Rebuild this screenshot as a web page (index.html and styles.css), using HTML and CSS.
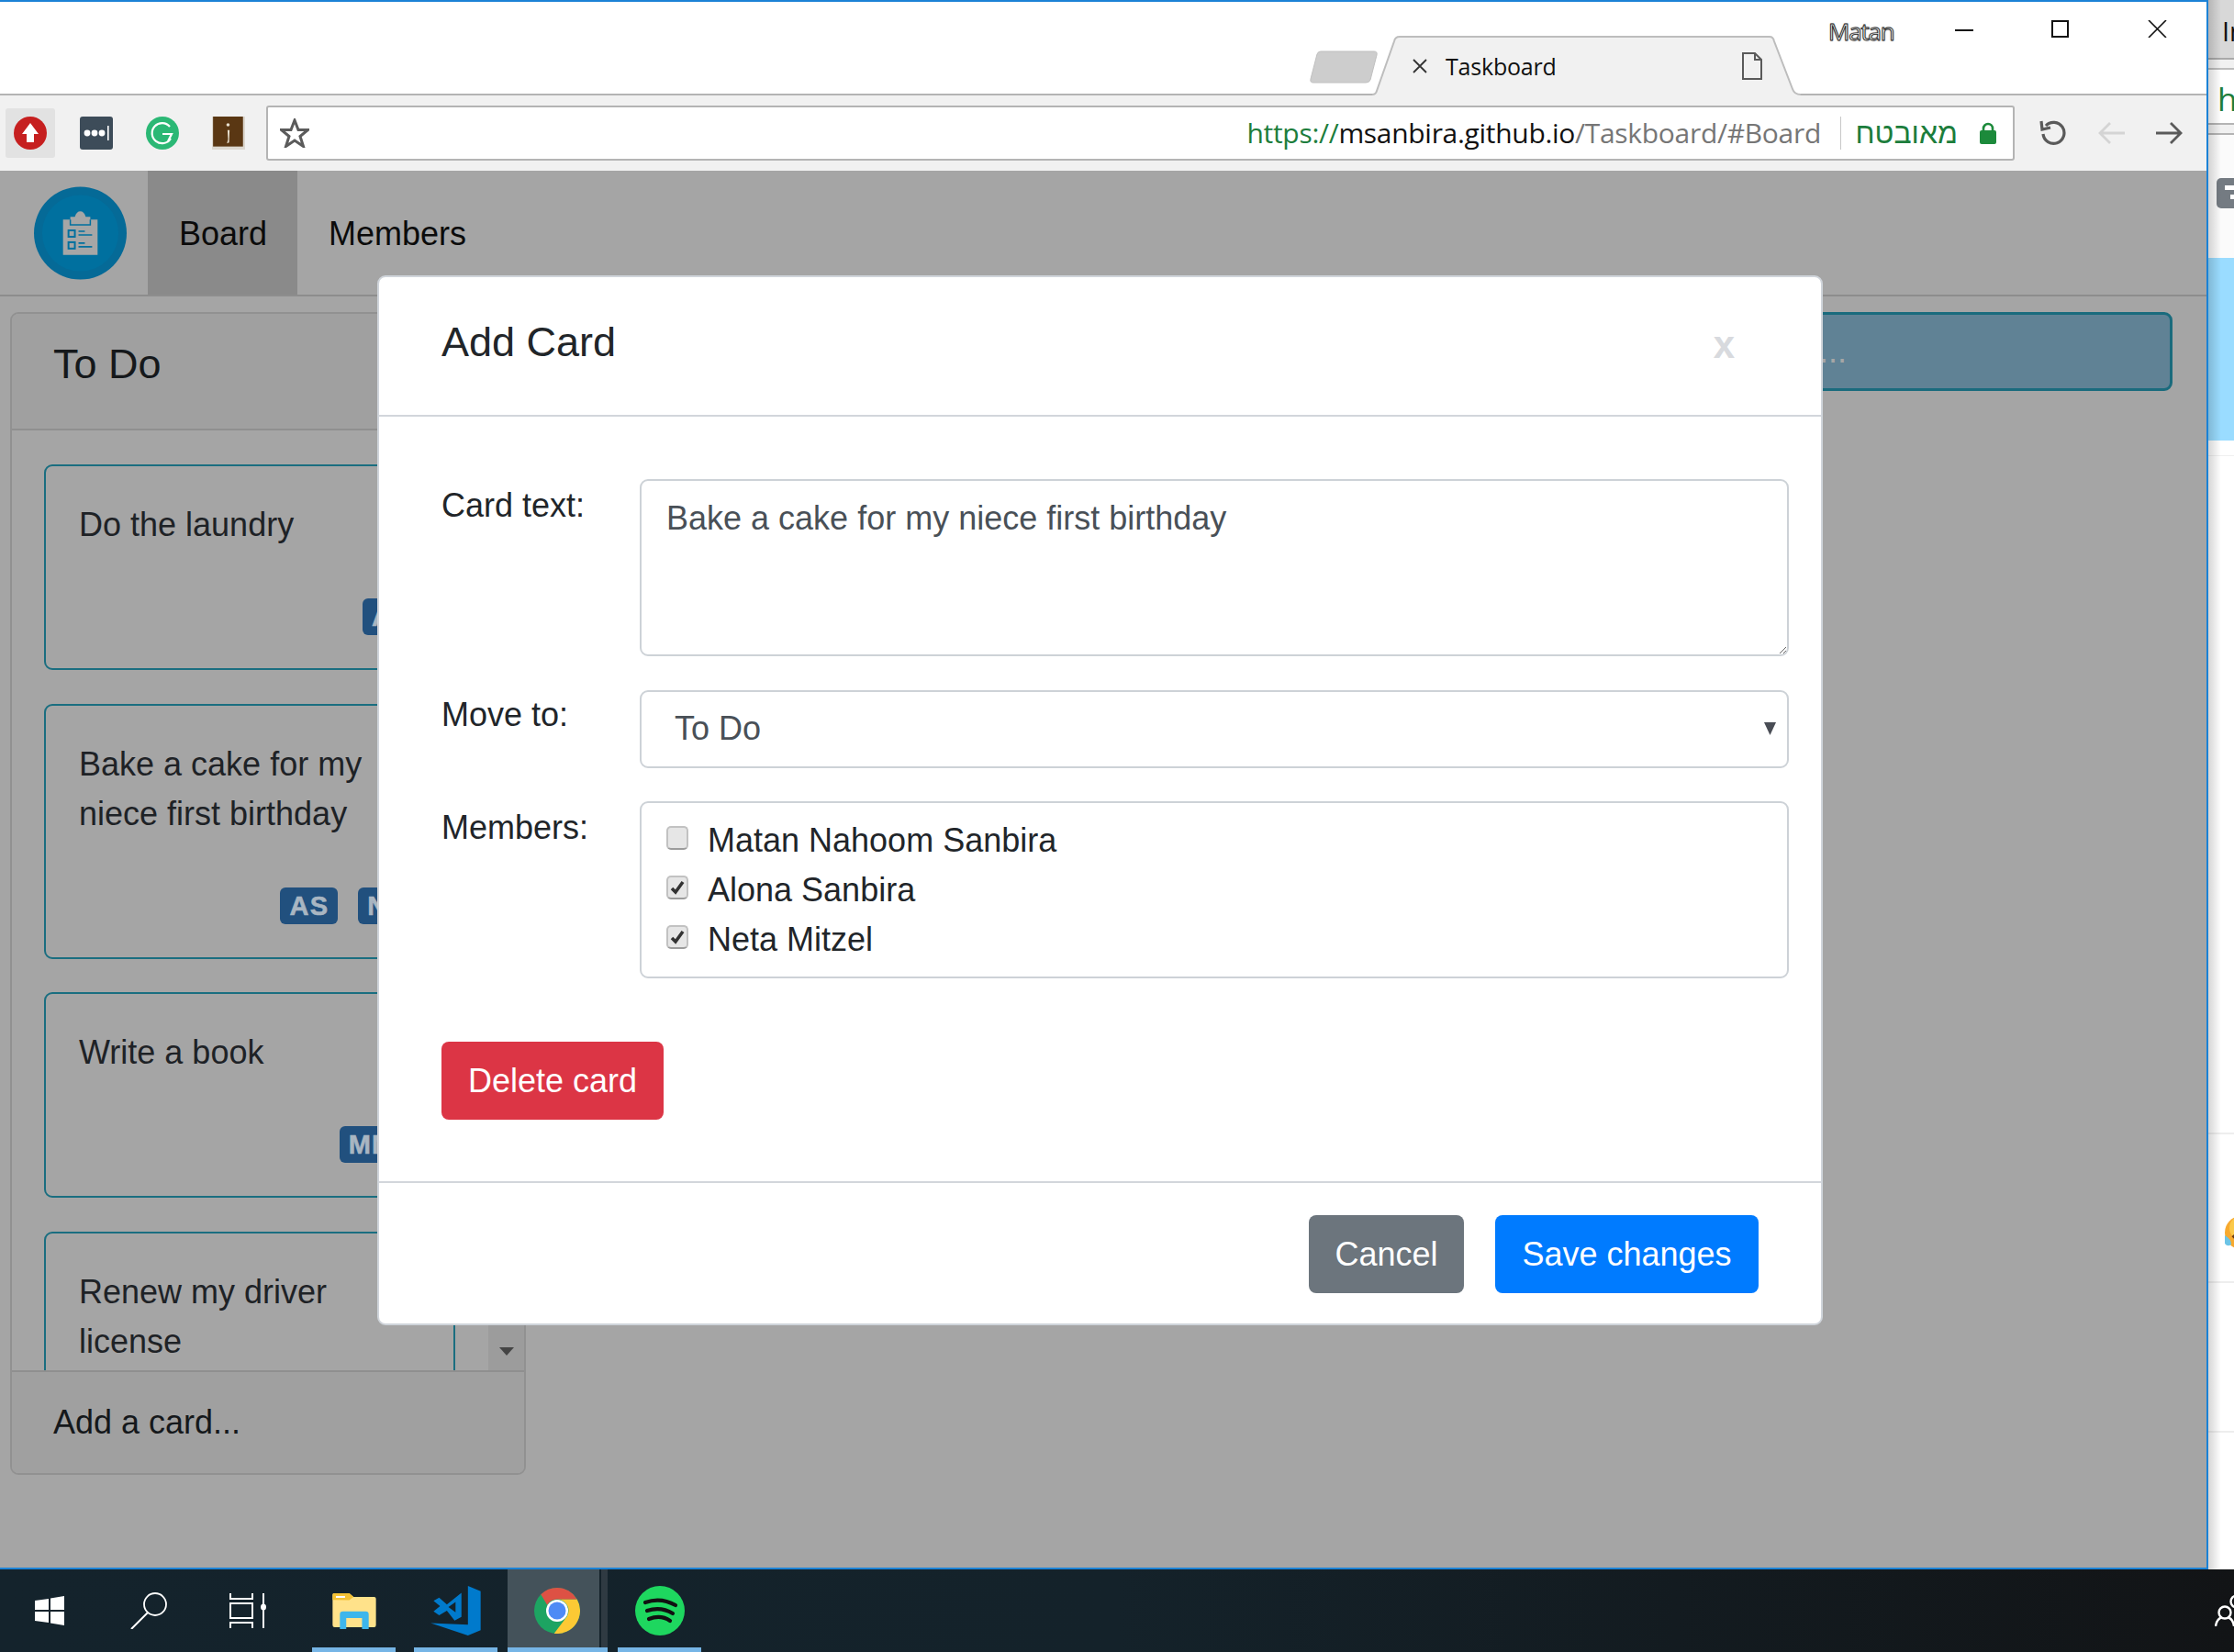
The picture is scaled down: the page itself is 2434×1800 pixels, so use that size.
FILE: index.html
```html
<!DOCTYPE html>
<html lang="en">
<head>
<meta charset="utf-8">
<title>Taskboard</title>
<link rel="stylesheet" href="styles.css">
</head>
<body>
<div class="screen">
  <div class="desktop">
    <div class="window">
      <div class="tabstrip">
        <svg class="newtab" viewBox="0 0 74 36"><path d="M12 1H70Q74 1 73 5L66 32Q65 35 61 35H4Q0 35 1 31L8 4Q9 1 12 1Z" fill="#cdcdcd" stroke="#c0c0c0"/></svg>
        <div class="tab">
          <svg class="tab-x" viewBox="0 0 16 16"><path d="M1 1L15 15M15 1L1 15" stroke="#333" stroke-width="1.8"/></svg>
          <span class="tab-title">Taskboard</span>
          <svg class="tab-page" viewBox="0 0 22 30"><path d="M1 1H14L21 8V29H1ZM14 1V8H21" fill="none" stroke="#5a5a5a" stroke-width="2"/></svg>
        </div>
        <span class="profile">Matan</span>
        <svg class="win-min" viewBox="0 0 20 2"><rect width="20" height="2" fill="#111"/></svg>
        <svg class="win-max" viewBox="0 0 19 19"><rect x="1" y="1" width="17" height="17" fill="none" stroke="#111" stroke-width="2"/></svg>
        <svg class="win-close" viewBox="0 0 21 19"><path d="M1 0L20 19M20 0L1 19" stroke="#111" stroke-width="1.6"/></svg>
      </div>
      <div class="toolbar">
        <div class="ext ext-active">
          <svg viewBox="0 0 36 36"><circle cx="18" cy="18" r="18" fill="#c61f1f"/><path d="M18 7L27 19H22V28H14V19H9Z" fill="#fff"/></svg>
        </div>
        <div class="ext">
          <svg viewBox="0 0 36 36"><rect width="36" height="36" rx="3" fill="#3d4c59"/><circle cx="8" cy="18" r="3.4" fill="#fff"/><circle cx="16" cy="18" r="3.4" fill="#fff"/><circle cx="24" cy="18" r="3.4" fill="#fff"/><rect x="30" y="10" width="1.6" height="16" fill="#fff"/></svg>
        </div>
        <div class="ext">
          <svg viewBox="0 0 36 36"><circle cx="18" cy="18" r="18" fill="#2bb875"/><path d="M26 11A11 11 0 1 0 27 24M18 19H28L24 27" fill="none" stroke="#fff" stroke-width="2.2"/></svg>
        </div>
        <div class="ext">
          <svg viewBox="0 0 32 32"><rect width="32" height="32" fill="#ddd8d0"/><rect x="1" y="0" width="29" height="29" fill="#5a3713"/><circle cx="15.5" cy="8" r="1.6" fill="#e8e0d0"/><path d="M15 13H17L16.5 25L14.5 26L15.5 22Z" fill="#e8e0d0"/></svg>
        </div>
        <div class="address">
          <svg class="star" viewBox="0 0 32 32"><path d="M16 2L20 12.500L30.500 12.500L22 19.500L25.500 30.500L16 24L6.500 30.500L10 19.500L1.500 12.500L12 12.500Z" fill="none" stroke="#5b5b5b" stroke-width="3"/></svg>
          <span class="url"><span class="url-scheme">https://</span><span class="url-host">msanbira.github.io</span><span class="url-path">/Taskboard/#Board</span></span>
          <span class="secure-sep"></span>
          <bdi class="secure" dir="rtl">מאובטח</bdi>
          <svg class="lock" viewBox="0 0 18 24"><path d="M4 11V7A5 5 0 0 1 14 7V11" fill="none" stroke="#1c8a3b" stroke-width="2.600"/><rect y="9" width="18" height="15" rx="2" fill="#1c8a3b"/></svg>
        </div>
        <svg class="nav-reload" viewBox="0 0 30 28"><path d="M7 6A11.500 11.500 0 1 1 4 15" fill="none" stroke="#5a5a5a" stroke-width="3.200"/><path d="M2 1L3 10L12 8" fill="none" stroke="#5a5a5a" stroke-width="3.200"/></svg>
        <svg class="nav-back" viewBox="0 0 31 26"><path d="M30 13H3M14 2L3 13L14 24" fill="none" stroke="#d4d4d4" stroke-width="2.800"/></svg>
        <svg class="nav-forward" viewBox="0 0 31 26"><path d="M1 13H28M17 2L28 13L17 24" fill="none" stroke="#5a5a5a" stroke-width="2.800"/></svg>
      </div>
      <div class="page">
        <nav class="navbar">
          <div class="brand">
            <svg viewBox="0 0 102 102">
              <circle cx="51" cy="51" r="51" fill="#056a97"/>
              <circle cx="51" cy="51" r="42" fill="#00709f"/>
              <path d="M32 36H40V33H45Q47 27 51 27Q55 27 57 33H62V36H70V75H32Z" fill="#a6a6a6"/>
              <path d="M40 36V42H62V36" fill="none" stroke="#00709f" stroke-width="1.500"/>
              <rect x="38" y="48" width="7" height="7" fill="none" stroke="#00709f" stroke-width="2"/>
              <rect x="38" y="61" width="7" height="7" fill="none" stroke="#00709f" stroke-width="2"/>
              <path d="M49 49H56M49 53H64M49 62H56M49 66H64" stroke="#00709f" stroke-width="1.600"/>
            </svg>
          </div>
          <a class="nav-item nav-item-active">Board</a>
          <a class="nav-item">Members</a>
        </nav>
        <div class="board">
          <section class="list">
            <header class="list-head">To Do</header>
            <div class="list-body">
              <div class="cards">
                <article class="card">
                  <p class="card-text">Do the laundry</p>
                  <div class="card-members"><span class="badge">AS</span></div>
                </article>
                <article class="card">
                  <p class="card-text">Bake a cake for my niece first birthday</p>
                  <div class="card-members"><span class="badge">AS</span><span class="badge">NM</span></div>
                </article>
                <article class="card">
                  <p class="card-text">Write a book</p>
                  <div class="card-members"><span class="badge">MNS</span></div>
                </article>
                <article class="card">
                  <p class="card-text">Renew my driver license</p>
                  <div class="card-members"><span class="badge">AS</span></div>
                </article>
              </div>
              <div class="scrollbar"><svg class="scroll-down" viewBox="0 0 16 9"><path d="M0 0H16L8 9Z" fill="#444"/></svg></div>
            </div>
            <footer class="list-foot">Add a card...</footer>
          </section>
          <div class="add-list">Add a list...</div>
        </div>
        <div class="modal">
          <div class="modal-head">
            <h2 class="modal-title">Add Card</h2>
            <span class="modal-close">x</span>
          </div>
          <div class="modal-body">
            <div class="form-grid">
              <label class="form-label">Card text:</label>
              <textarea class="field field-text">Bake a cake for my niece first birthday</textarea>
              <label class="form-label form-label-tight">Move to:</label>
              <select class="field field-select"><option>To Do</option></select>
              <label class="form-label">Members:</label>
              <div class="field field-members">
                <label class="member"><input type="checkbox" class="check"><span>Matan Nahoom Sanbira</span></label>
                <label class="member"><input type="checkbox" class="check" checked><span>Alona Sanbira</span></label>
                <label class="member"><input type="checkbox" class="check" checked><span>Neta Mitzel</span></label>
              </div>
            </div>
            <button class="btn btn-danger">Delete card</button>
          </div>
          <div class="modal-foot">
            <button class="btn btn-secondary">Cancel</button>
            <button class="btn btn-primary">Save changes</button>
          </div>
        </div>
      </div>
    </div>
    <aside class="side">
      <div class="side-tabs">In</div>
      <div class="side-gap"></div>
      <div class="side-url">ht</div>
      <div class="side-bar"></div>
      <div class="side-top"><span class="side-badge"></span></div>
      <div class="side-blue"></div>
      <div class="side-white"></div>
      <div class="side-row side-row-a"></div>
      <div class="side-row side-row-b">
        <svg class="emoji" viewBox="0 0 38 38"><circle cx="19" cy="19" r="18" fill="#f7a92e"/><circle cx="19" cy="14" r="13" fill="#fbc94a"/><path d="M10 22Q19 32 30 20" fill="none" stroke="#6b3b10" stroke-width="4"/><path d="M1 22Q8 26 8 32Q4 35 1 31Z" fill="#6cc4e6"/></svg>
      </div>
      <div class="side-row side-row-c"></div>
      <div class="side-row side-row-d"></div>
    </aside>
  </div>
  <div class="taskbar">
    <div class="task-cell task-sys">
      <svg class="ico-win" viewBox="0 0 32 32"><path d="M0 5L15 3V15H0ZM17 2.600L32 0V15H17ZM0 17H15V29L0 27ZM17 17H32V32L17 29.400Z" fill="#fff"/></svg>
    </div>
    <div class="task-cell task-sys">
      <svg class="ico-search" viewBox="0 0 40 40"><ellipse cx="27" cy="13" rx="12" ry="12" fill="none" stroke="#fff" stroke-width="1.800"/><path d="M19 22L1 40" stroke="#fff" stroke-width="2"/></svg>
    </div>
    <div class="task-cell task-sys">
      <svg class="ico-view" viewBox="0 0 40 38"><path d="M1 0V6H25V0M1 11H25V27H1ZM1 38V32H25V38M37 0V12M37 18V38" fill="none" stroke="#fff" stroke-width="2"/><ellipse cx="37" cy="15" rx="3" ry="3.500" fill="#fff"/></svg>
    </div>
    <div class="task-cell task-app">
      <svg class="ico-folder" viewBox="63 60 143 118"><path d="M63 65Q63 60 68 60H118L132 72H200Q206 72 206 78V165Q206 172 200 172H70Q63 172 63 165Z" fill="#ffe28a"/><path d="M63 82V65Q63 60 68 60H118L132 72L118 83Z" fill="#f5c235"/><rect x="74" y="69" width="30" height="6" fill="#fff"/><path d="M87 178V130Q87 120 97 120H172Q182 120 182 130V178H160V142H108V178Z" fill="#3db6ec"/></svg>
    </div>
    <div class="task-cell task-app">
      <svg class="ico-code" viewBox="388 40 161 160"><path fill-rule="evenodd" d="M397 88L415 78L440 100L487 62V140L465 152L440 120L415 135L397 122L418 105ZM445 108L468 92V125Z" fill="#007acc"/><path d="M508 40L549 57V183L508 200L388 160L508 165Z" fill="#007acc"/></svg>
    </div>
    <div class="task-cell task-app task-open">
      <svg class="ico-chrome" viewBox="0 0 100 100">
        <circle cx="50" cy="50" r="50" fill="#1da462"/>
        <path d="M93.300 25A50 50 0 0 1 43.500 99.600L71.600 62.500A25 25 0 0 0 50 25Z" fill="#fcc934"/>
        <path d="M50 0A50 50 0 0 1 93.300 25H50A25 25 0 0 0 28.300 37.500L14.600 14.600A50 50 0 0 1 50 0Z" fill="#dd5144"/>
        <circle cx="50" cy="50" r="24" fill="#fff"/>
        <circle cx="50" cy="50" r="19" fill="#4e8bf5"/>
      </svg>
    </div>
    <div class="task-cell task-app">
      <svg class="ico-spotify" viewBox="0 0 54 54"><circle cx="27" cy="27" r="27" fill="#1ed75f"/><path d="M11 18Q28 12 44 21M13 27Q28 22 41 30M15 36Q28 31 38 38" fill="none" stroke="#111" stroke-width="4.200" stroke-linecap="round"/></svg>
    </div>
    <svg class="ico-people" viewBox="0 0 30 36"><circle cx="11" cy="21" r="6.500" fill="none" stroke="#fff" stroke-width="2.400"/><path d="M1 36Q2 28 8 26M21 36Q20 28 14 26" fill="none" stroke="#fff" stroke-width="2.400"/><circle cx="24" cy="9" r="6.500" fill="none" stroke="#fff" stroke-width="2.400"/></svg>
  </div>
</div>
</body>
</html>
```
FILE: styles.css
```css
* { box-sizing: border-box; }
html, body { margin: 0; padding: 0; }
body {
  width: 2434px;
  height: 1800px;
  overflow: hidden;
  font-family: "Liberation Sans", Arial, sans-serif;
  font-size: 36px;
  line-height: 54px;
  color: #1c1f22;
  background: #fff;
}
.screen { display: flex; flex-direction: column; width: 2434px; height: 1800px; }
.desktop { display: flex; height: 1710px; }

/* browser window */
.window {
  width: 2406px;
  height: 1710px;
  display: flex;
  flex-direction: column;
  border-top: 2px solid #1b82d6;
  border-right: 2px solid #1b82d6;
  border-bottom: 2px solid #1b82d6;
}
.tabstrip {
  height: 102px;
  flex: none;
  display: flex;
  justify-content: flex-end;
  align-items: flex-start;
  padding-right: 43px;
  border-bottom: 2px solid #b4b4b4;
  background: #fff;
}
.newtab { width: 74px; height: 36px; margin-top: 53px; margin-right: -6px; flex: none; }
.tab {
  width: 467px;
  height: 65px;
  margin-top: 37px;
  flex: none;
  display: flex;
  align-items: center;
  padding: 0 42px 0 44px;
  background: url("data:image/svg+xml,%3Csvg xmlns='http://www.w3.org/2000/svg' width='467' height='65'%3E%3Cpath d='M0 64Q4 64 5 60L24 6Q25 1 30 1H433Q437 1 438 6L458 58Q460 64 467 64V66H0Z' fill='%23f1f1f1' stroke='%23bdbdbd' stroke-width='2'/%3E%3C/svg%3E") no-repeat;
}
.tab-x { width: 16px; height: 16px; flex: none; }
.tab-title {
  flex: 1;
  margin-left: 20px;
  font-family: "Open Sans", sans-serif;
  font-size: 25px;
  line-height: 34px;
  letter-spacing: -.2px;
  color: #111;
}
.tab-page { width: 22px; height: 30px; flex: none; }
.profile {
  width: 72px;
  margin: 16px 0 0 30px;
  flex: none;
  font-family: "Open Sans", sans-serif;
  font-size: 26px;
  line-height: 32px;
  letter-spacing: -1.200px;
  color: #f6f6f6;
  -webkit-text-stroke: .9px #222;
  text-shadow: 0 0 2px #666;
}
.win-min { width: 20px; height: 2px; margin: 30px 0 0 66px; flex: none; }
.win-max { width: 19px; height: 19px; margin: 20px 0 0 85px; flex: none; }
.win-close { width: 21px; height: 19px; margin: 20px 0 0 86px; flex: none; }

.toolbar {
  height: 82px;
  flex: none;
  display: flex;
  align-items: center;
  padding-left: 6px;
  gap: 18px;
  background: #f1f1f1;
}
.ext { width: 54px; height: 54px; flex: none; display: flex; align-items: center; justify-content: center; border-radius: 3px; }
.ext-active { background: #e2e2e2; }
.ext svg { width: 36px; height: 36px; }
.address {
  width: 1905px;
  height: 60px;
  margin-left: -4px;
  flex: none;
  display: flex;
  align-items: center;
  padding: 0 18px 0 13px;
  background: #fff;
  border: 2px solid #b4b4b4;
  border-radius: 3px;
}
.star { width: 32px; height: 32px; flex: none; }
.url {
  margin-left: auto;
  font-family: "Open Sans", sans-serif;
  font-size: 30px;
  line-height: 40px;
  letter-spacing: -.3px;
  white-space: nowrap;
  color: #767676;
}
.url-scheme { color: #1c7d3c; }
.url-host { color: #111; }
.secure-sep { width: 1px; height: 36px; margin: 0 19px 0 21px; background: #c8c8c8; flex: none; }
.secure { font-family: "Liberation Sans", sans-serif; font-size: 32px; line-height: 40px; color: #1c7d3c; width: 108px; flex: none; text-align: center; }
.lock { width: 18px; height: 24px; margin-left: 24px; flex: none; }
.nav-reload { width: 30px; height: 28px; margin-left: 9px; flex: none; }
.nav-back { width: 31px; height: 26px; margin-left: 15px; flex: none; }
.nav-forward { width: 31px; height: 26px; margin-left: 14px; flex: none; }

/* app page (dimmed by the open dialog) */
.page { position: relative; flex: 1; display: flex; flex-direction: column; background: #a5a5a5; overflow: hidden; }
.navbar { height: 137px; flex: none; display: flex; border-bottom: 2px solid #8d8d8d; }
.brand { width: 161px; flex: none; display: flex; align-items: center; padding: 0 0 0 37px; }
.brand svg { width: 101px; height: 102px; }
.nav-item { padding: 2px 33px 0 34px; display: flex; align-items: center; color: #0b0b0b; }
.nav-item-active { background: #8a8a8a; }

.board { flex: 1; display: flex; align-items: flex-start; padding: 17px 37px 0 11px; }
.list {
  width: 562px;
  height: 1267px;
  flex: none;
  display: flex;
  flex-direction: column;
  border: 2px solid #919191;
  border-radius: 9px;
  overflow: hidden;
}
.list-head {
  height: 127px;
  flex: none;
  padding: 28px 0 0 45px;
  font-size: 45px;
  line-height: 54px;
  background: #a0a0a0;
  border-bottom: 2px solid #8f8f8f;
  color: #15181b;
}
.list-body { flex: 1; min-height: 0; display: flex; }
.cards { flex: 1; min-width: 0; overflow: hidden; display: flex; flex-direction: column; gap: 36.500px; padding: 37px 36px 0 35px; }
.card { flex: none; border: 2px solid #1a6e80; border-radius: 9px; padding: 37px 36px 36px; }
.card-text { margin: 0; color: #1e2226; }
.card-members { display: flex; justify-content: flex-end; gap: 22px; margin-top: 53px; }
.badge {
  height: 40px;
  padding: 0 10px;
  font-size: 29px;
  line-height: 40px;
  font-weight: 700;
  letter-spacing: 1.300px;
  -webkit-text-stroke: .6px #a9b6c2;
  color: #a9b6c2;
  background: #21507e;
  border-radius: 6px;
}
.scrollbar { width: 39px; flex: none; display: flex; align-items: flex-end; justify-content: center; padding-bottom: 16px; background: #9c9c9c; }
.scroll-down { width: 16px; height: 9px; }
.list-foot {
  height: 112px;
  flex: none;
  padding: 28px 0 0 45px;
  background: #a0a0a0;
  border-top: 2px solid #8f8f8f;
  color: #15181b;
}
.add-list {
  width: 547px;
  height: 86px;
  margin-left: auto;
  display: flex;
  align-items: center;
  padding-left: 11px;
  color: #a6a6a6;
  background: #608295;
  border: 3px solid #1a6b7d;
  border-radius: 9px;
}

/* dialog */
.modal {
  position: absolute;
  left: 411px;
  top: 114px;
  width: 1575px;
  height: 1144px;
  display: flex;
  flex-direction: column;
  background: #fff;
  border: 2px solid #cfd4da;
  border-radius: 9px;
}
.modal-head {
  height: 152px;
  flex: none;
  display: flex;
  align-items: flex-start;
  justify-content: space-between;
  padding: 37px 0 0 68px;
  border-bottom: 2px solid #d2d6db;
}
.modal-title { margin: 0; font-size: 45px; font-weight: 400; line-height: 68px; color: #212529; }
.modal-close { margin: 10px 94px 0 0; font-size: 42px; font-weight: 700; line-height: 54px; color: #d8dade; }
.modal-body { flex: 1; padding: 68px 35px 0 68px; }
.form-grid { display: grid; grid-template-columns: 216px 1252px; row-gap: 36.500px; }
.form-label { padding-top: 2px; line-height: 54px; color: #212529; }
.form-label-tight { padding-top: 0; }
.field {
  display: block;
  width: 1252px;
  border: 2px solid #cdd2d7;
  border-radius: 9px;
  background: #fff;
  font: inherit;
  color: #212529;
}
.field-text { height: 193px; padding: 14px 27px; line-height: 54px; color: #495057; }
.field-select {
  height: 85px;
  padding: 0 36px;
  color: #495057;
  appearance: none;
  background: #fff url("data:image/svg+xml,%3Csvg xmlns='http://www.w3.org/2000/svg' width='13' height='14'%3E%3Cpath d='M0 0H13L6.500 14Z' fill='%23494d55'/%3E%3C/svg%3E") no-repeat right 12px center;
}
.field-members { height: 193px; padding: 14px 27px; }
.member { display: flex; align-items: center; gap: 21px; height: 54px; color: #212529; }
.check {
  appearance: none;
  width: 24px;
  height: 26px;
  margin: -6px 0 0;
  flex: none;
  border: 2px solid #c2c2c2;
  border-bottom-color: #9c9c9c;
  border-radius: 5px;
  background: #e6e6e6;
}
.check:checked {
  background: #e6e6e6 url("data:image/svg+xml,%3Csvg xmlns='http://www.w3.org/2000/svg' width='16' height='16'%3E%3Cpath d='M2 9L6 13L14 2' fill='none' stroke='%23333' stroke-width='3.500'/%3E%3C/svg%3E") no-repeat center;
}
.btn {
  height: 85px;
  padding: 0 29px;
  border: 0;
  border-radius: 8px;
  font: inherit;
  color: #fff;
}
.btn-danger { margin-top: 69px; background: #dc3545; }
.btn-secondary { width: 169px; padding: 0; background: #6c757d; }
.btn-primary { width: 287px; padding: 0; background: #007bff; }
.modal-foot {
  height: 155px;
  flex: none;
  display: flex;
  justify-content: flex-end;
  gap: 34px;
  padding: 35px 68px 0 0;
  border-top: 2px solid #d2d6db;
}

/* next window behind */
.side { position: relative; width: 28px; height: 1710px; flex: none; display: flex; flex-direction: column; overflow: hidden; background: #fff; }
.side::after { content: ""; position: absolute; inset: 0; background: linear-gradient(90deg, rgba(0,0,0,.16), rgba(0,0,0,0) 14px); }
.side-tabs {
  height: 65px;
  flex: none;
  padding: 14px 0 0 15px;
  font-family: "Open Sans", sans-serif;
  font-size: 29px;
  line-height: 40px;
  color: #111;
  background: #d8d8d8;
  border-bottom: 2px solid #a9a9a9;
}
.side-gap { height: 11px; flex: none; background: #f1f1f1; border-bottom: 2px solid #bdbdbd; }
.side-url {
  height: 60px;
  flex: none;
  padding: 10px 0 0 10px;
  font-family: "Open Sans", sans-serif;
  font-size: 35px;
  line-height: 44px;
  color: #1c7d3c;
  background: #fff;
  border-bottom: 2px solid #b4b4b4;
}
.side-bar { height: 11px; flex: none; background: #f1f1f1; border-bottom: 2px solid #b4b4b4; }
.side-top { height: 134px; flex: none; padding: 47px 0 0 9px; background: #fbfbfb; }
.side-badge {
  display: block;
  width: 30px;
  height: 33px;
  border-radius: 5px;
  background: linear-gradient(#fff, #fff) 9px 8px / 30px 5px no-repeat, linear-gradient(#fff, #fff) 15px 18px / 30px 5px no-repeat, #747b82;
}
.side-blue { height: 199px; flex: none; background: #9adcff; }
.side-white { height: 17px; flex: none; background: #fff; border-bottom: 1px solid #f0f0f0; }
.side-row { flex: none; border-bottom: 2px solid #eeeeee; }
.side-row-a { height: 739px; }
.side-row-b { height: 162px; display: flex; align-items: center; padding: 54px 0 0 17px; }
.side-row-c { height: 163px; }
.side-row-d { flex: 1; border-bottom: 0; }
.emoji { width: 38px; height: 38px; flex: none; }

/* taskbar */
.taskbar {
  height: 90px;
  flex: none;
  display: flex;
  align-items: stretch;
  position: relative;
  overflow: hidden;
  background: linear-gradient(90deg, #14232c, #14222a 50%, #121416);
}
.task-cell { display: flex; align-items: center; justify-content: center; flex: none; height: 90px; }
.task-sys { width: 108px; }
.task-app { width: 91px; margin-left: 20px; border-bottom: 5px solid #76b5e6; padding-top: 5px; }
.task-sys + .task-app { margin-left: 16px; }
.task-open {
  width: 109px;
  margin-left: 11px;
  justify-content: flex-start;
  padding-left: 29px;
  background: linear-gradient(90deg, #44525a 100px, #14222a 100px, #14222a 102px, #2f3a42 102px);
}
.task-open + .task-app { margin-left: 11px; }
.ico-win { width: 32px; height: 32px; }
.ico-search { width: 40px; height: 40px; }
.ico-view { width: 40px; height: 38px; }
.ico-folder { width: 48px; height: 39px; }
.ico-code { width: 55px; height: 54px; }
.ico-chrome { width: 50px; height: 50px; }
.ico-spotify { width: 54px; height: 54px; }
.ico-people { position: absolute; left: 2413px; top: 26px; width: 30px; height: 36px; }
```
